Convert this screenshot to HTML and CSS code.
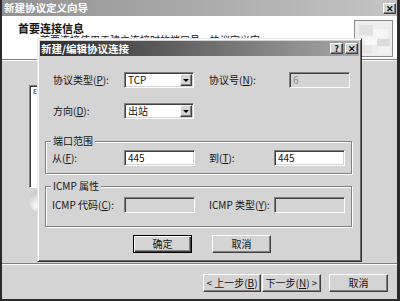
FILE: index.html
```html
<!DOCTYPE html>
<html lang="zh-CN">
	<head>
		<meta charset="UTF-8" />
		<meta name="viewport" content="width=device-width, initial-scale=1.0" />
		<title>新建协议定义向导</title>
		<link rel="stylesheet" href="styles.css">
	</head>
	<body>

		<div class="wizard">
			<div class="caption">
				<span class="caption-text">新建协议定义向导</span>
				<span class="cap-btn">✕</span>
			</div>

			<header class="wiz-head">
				<div class="head-text">
					<h1>首要连接信息</h1>
					<p>首要连接使用于建立连接时的端口号，协议定义它。</p>
				</div>
				<div class="head-icon">
					<svg width="37" height="35" viewBox="0 0 37 35">
						<rect x="0" y="0" width="37" height="35" fill="#eeeeee" />
						<rect x="4" y="4" width="14" height="10" fill="#e2e2e2" />
						<rect x="18" y="8" width="15" height="9" fill="#f6f6f6" />
						<rect x="10" y="16" width="12" height="8" fill="#f9f9f9" />
						<rect x="22" y="18" width="13" height="7" fill="#dcdcdc" />
						<rect x="24" y="26" width="11" height="6" fill="#f3f3f3" />
						<rect x="3" y="24" width="14" height="8" fill="#e6e6e6" />
					</svg>
				</div>
			</header>
			<div class="rule"></div>

			<div class="wiz-body">
				<div class="listbox"><span class="list-head">ε</span></div>
				<div class="knob"></div>
			</div>

			<div class="rule"></div>
			<footer class="wiz-foot">
				<button class="btn btn-back">&lt; 上一步(<u>B</u>)</button>
				<button class="btn btn-next">下一步(<u>N</u>) &gt;</button>
				<button class="btn btn-cancel">取消</button>
			</footer>

			<!-- modal dialog on top of the wizard -->
			<div class="dialog">
				<div class="dlg-title">
					<span>新建/编辑协议连接</span>
					<span class="dlg-btns">
						<span class="cap-btn">?</span>
						<span class="cap-btn">✕</span>
					</span>
				</div>

				<div class="dlg-body">
					<div class="row row-first">
						<label class="lbl">协议类型(<u>P</u>):</label>
						<div class="combo">
							<span class="combo-text">TCP</span>
							<span class="combo-arrow"></span>
						</div>
						<label class="lbl lbl-wide">协议号(<u>N</u>):</label>
						<div class="field field-small disabled"><span class="grey">6</span></div>
					</div>

					<div class="row row-second">
						<label class="lbl">方向(<u>D</u>):</label>
						<div class="combo">
							<span class="combo-text">出站</span>
							<span class="combo-arrow"></span>
						</div>
					</div>

					<div class="group group-ports">
						<span class="group-title">端口范围</span>
						<div class="row">
							<label class="lbl lbl-in">从(<u>F</u>):</label>
							<div class="field">445</div>
							<label class="lbl lbl-to">到(<u>T</u>):</label>
							<div class="field">445</div>
						</div>
					</div>

					<div class="group group-icmp">
						<span class="group-title">ICMP 属性</span>
						<div class="row">
							<label class="lbl lbl-in">ICMP 代码(<u>C</u>):</label>
							<div class="field disabled"></div>
							<label class="lbl lbl-to">ICMP 类型(<u>Y</u>):</label>
							<div class="field disabled"></div>
						</div>
					</div>

					<div class="dlg-actions">
						<button class="btn btn-default">确定</button>
						<button class="btn">取消</button>
					</div>
				</div>
			</div>
		</div>

	</body>
</html>
```

FILE: styles.css
```css
* {
	box-sizing: border-box;
	margin: 0;
	padding: 0;
}

body {
	width: 400px;
	height: 301px;
	overflow: hidden;
	background: #d4d4d4;
	color: #141414;
	font-family: "Noto Sans CJK SC", "Liberation Sans", sans-serif;
	font-size: 10px;
	line-height: 12px;
}

u {
	text-decoration: underline;
}

.wizard {
	position: relative;
	width: 400px;
	height: 301px;
	display: flex;
	flex-direction: column;
	background: #d4d4d4;
	border-left: 2px solid #2a2a2a;
	border-right: 3px solid #2a2a2a;
	border-bottom: 2px solid #2a2a2a;
}

/* title bars */
.caption {
	height: 16px;
	flex-shrink: 0;
	display: flex;
	align-items: center;
	justify-content: space-between;
	padding: 0 1px 0 2px;
	background: linear-gradient(to right, #929292, #c4c4c4);
	color: #fff;
	font-weight: bold;
	font-size: 10.5px;
}

.cap-btn {
	width: 13px;
	height: 11px;
	display: flex;
	align-items: center;
	justify-content: center;
	background: #d4d4d4;
	color: #111;
	font-size: 9px;
	font-weight: bold;
	line-height: 9px;
	border: 1px solid;
	border-color: #fff #404040 #404040 #fff;
	box-shadow: inset -1px -1px 0 #808080;
}

/* wizard header */
.wiz-head {
	height: 43px;
	flex-shrink: 0;
	display: flex;
	background: #fff;
	padding: 4px 4px 0 16px;
}

.head-text {
	flex: 1;
}

.wiz-head h1 {
	margin-top: 2px;
	font-size: 11px;
	line-height: 12px;
	font-weight: bold;
}

/* only the top of this line shows above the dialog */
.wiz-head p {
	margin-left: 22px;
	height: 4px;
	overflow: hidden;
	font-size: 10px;
	line-height: 12px;
}

.head-icon {
	width: 39px;
	height: 37px;
	border: 1px solid #8a8a8a;
}

.head-icon svg {
	display: block;
}

.rule {
	height: 2px;
	flex-shrink: 0;
	border-top: 1px solid #808080;
	border-bottom: 1px solid #fff;
}

/* wizard page body, mostly hidden by the dialog */
.wiz-body {
	flex: 1;
	padding: 24px 0 0 27px;
}

.listbox {
	width: 40px;
	height: 103px;
	background: #fff;
	border: 1px solid;
	border-color: #808080 #fff #fff #808080;
	box-shadow: inset 1px 1px 0 #404040;
	padding: 1px 0 0 3px;
	font-size: 8px;
	line-height: 8px;
}

.knob {
	width: 22px;
	height: 22px;
	margin-top: 2px;
	border-radius: 50%;
	background: radial-gradient(circle at 40% 70%, #ffffff, #c4c4c4 70%, #9a9a9a);
}

.wiz-foot {
	height: 34px;
	flex-shrink: 0;
	display: flex;
	justify-content: flex-end;
	align-items: flex-start;
	padding: 9px 9px 0 0;
}

/* buttons */
.btn {
	height: 18px;
	width: 59px;
	background: #d4d4d4;
	color: #141414;
	font: inherit;
	border: 1px solid;
	border-color: #fff #404040 #404040 #fff;
	box-shadow: inset -1px -1px 0 #808080;
}

.btn-back {
	width: 58px;
	margin-right: 1px;
}

.btn-cancel {
	margin-left: 8px;
}

.btn-default {
	border-color: #000;
	box-shadow: inset 1px 1px 0 #fff, inset -1px -1px 0 #404040, inset -2px -2px 0 #808080;
}

/* dialog */
.dialog {
	position: absolute;
	left: 35px;
	top: 38px;
	width: 325px;
	height: 224px;
	background: #d4d4d4;
	border: 1px solid;
	border-color: #e6e6e6 #2e2e2e #2e2e2e #e6e6e6;
	box-shadow: inset 1px 1px 0 #fff, inset -1px -1px 0 #6a6a6a;
	padding: 2px;
}

.dlg-title {
	height: 15px;
	display: flex;
	align-items: center;
	justify-content: space-between;
	padding: 0 1px 0 1px;
	background: linear-gradient(to right, #2c2c2c, #a8a8a8);
	color: #fff;
	font-weight: bold;
	font-size: 10.5px;
}

.dlg-btns {
	display: flex;
	gap: 2px;
}

.dlg-body {
	padding: 16px 0 0 5px;
}

.row {
	display: flex;
	align-items: center;
	height: 16px;
}

.row-first,
.row-second {
	padding-left: 8px;
}

.row-second {
	margin-top: 15px;
}

.lbl {
	width: 71px;
	white-space: nowrap;
}

.lbl-wide {
	width: 80px;
	margin-left: 15px;
}

.lbl-in {
	width: 72px;
}

.lbl-to {
	width: 65px;
	margin-left: 14px;
}

.combo {
	width: 70px;
	height: 16px;
	display: flex;
	background: #fff;
	border: 1px solid;
	border-color: #808080 #fff #fff #808080;
	box-shadow: inset 1px 1px 0 #404040, inset -1px -1px 0 #d4d4d4;
	padding: 1px;
}

.combo-text {
	flex: 1;
	padding-left: 2px;
	line-height: 12px;
}

.combo-arrow {
	width: 12px;
	height: 12px;
	position: relative;
	background: #d4d4d4;
	border: 1px solid;
	border-color: #fff #404040 #404040 #fff;
	box-shadow: inset -1px -1px 0 #808080;
}

.combo-arrow::after {
	content: "";
	position: absolute;
	left: 2px;
	top: 4px;
	border-left: 3px solid transparent;
	border-right: 3px solid transparent;
	border-top: 3px solid #000;
}

.field {
	width: 71px;
	height: 16px;
	background: #fff;
	border: 1px solid;
	border-color: #808080 #fff #fff #808080;
	box-shadow: inset 1px 1px 0 #404040, inset -1px -1px 0 #d4d4d4;
	padding: 1px 3px;
	line-height: 12px;
}

.field-small {
	width: 61px;
}

.field.disabled {
	background: #d4d4d4;
}

.grey {
	color: #8a8a8a;
}

/* etched group boxes */
.group {
	position: relative;
	width: 307px;
	border: 1px solid #808080;
	box-shadow: inset 1px 1px 0 #fff, 1px 1px 0 #fff;
	padding-left: 6px;
}

.group-title {
	position: absolute;
	top: -7px;
	left: 5px;
	padding: 0 2px;
	background: #d4d4d4;
}

.group-ports {
	height: 33px;
	margin-top: 22px;
	padding-top: 8px;
}

.group-icmp {
	height: 41px;
	margin-top: 12px;
	padding-top: 10px;
}

.dlg-actions {
	display: flex;
	justify-content: center;
	gap: 20px;
	margin-top: 8px;
}
```
